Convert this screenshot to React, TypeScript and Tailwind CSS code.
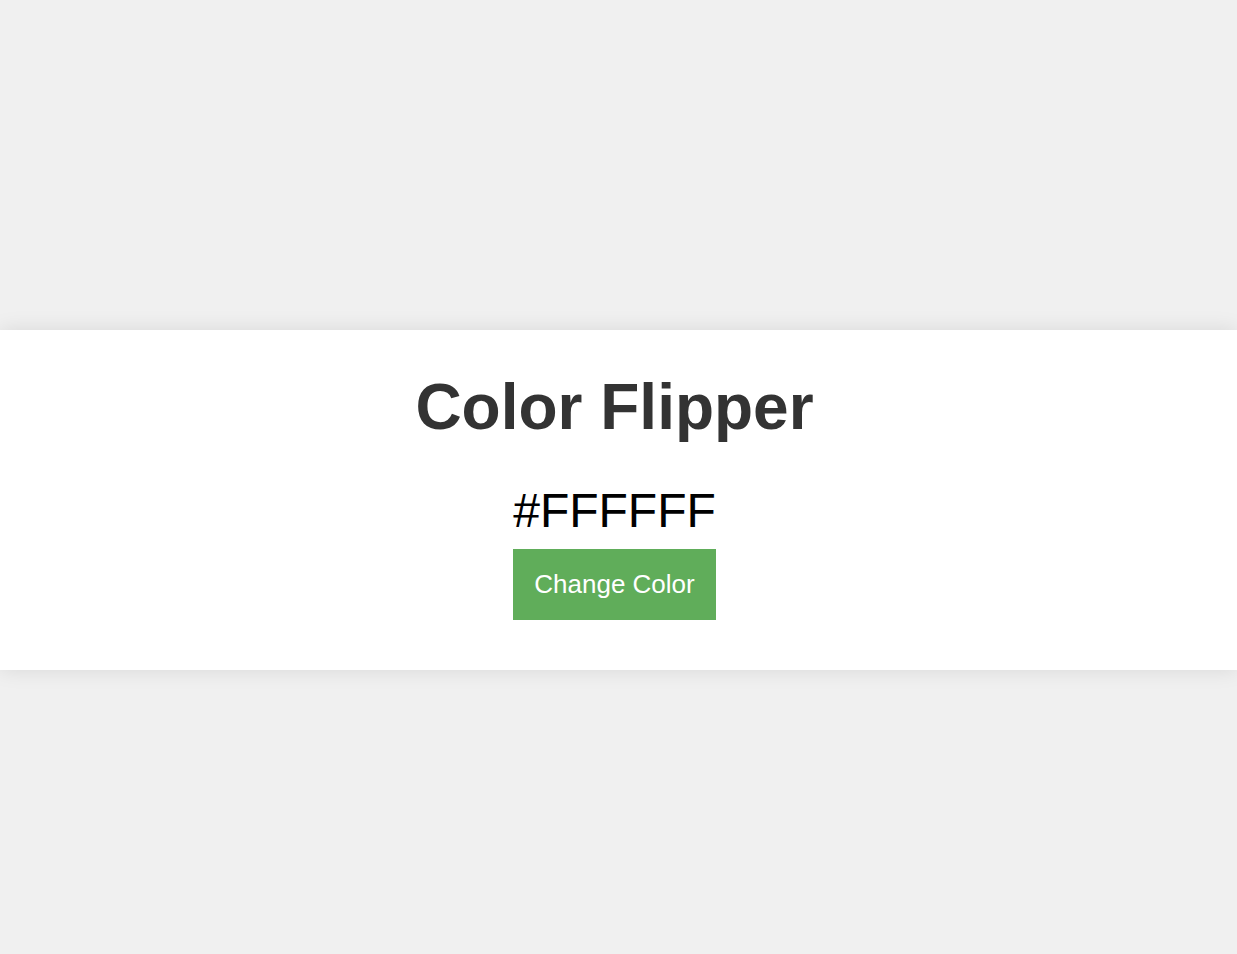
export default function App() {
  return (
    <div className="min-h-screen bg-[#f0f0f0] pt-[330px] font-['Liberation_Sans',Arial,sans-serif]">
      {/* Card */}
      <div className="flex flex-col items-center bg-white pt-[40px] pr-[8px] pb-[50px] shadow-[0_0_20px_rgba(0,0,0,0.1)]">
        <h1 className="mb-[39px] text-[64px] font-bold leading-[74px] text-[#333]">
          Color Flipper
        </h1>

        <p className="mb-[11px] text-[48px] leading-[55px] text-black">
          #FFFFFF
        </p>

        <button className="bg-[#60ad5a] px-[21px] py-[20px] text-[26px] leading-[31px] text-white">
          Change Color
        </button>
      </div>
    </div>
  );
}
